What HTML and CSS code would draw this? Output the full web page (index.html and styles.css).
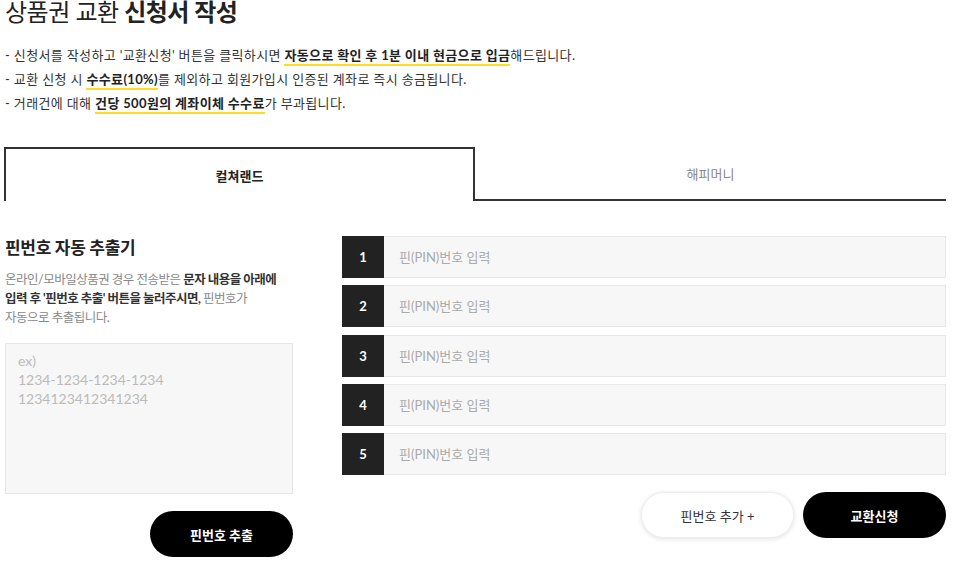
FILE: index.html
```html
<!DOCTYPE html>
<html lang="ko">
<head>
    <meta charset="UTF-8">
    <meta name="viewport" content="width=device-width, initial-scale=1.0">
    <title>상품권 교환 신청서 작성</title>
    <link rel="stylesheet" href="styles.css">
</head>
<body>
    <div class="wrap">
        <h2 class="page-title">상품권 교환 <strong>신청서 작성</strong></h2>
        <ul class="notice">
            <li>- 신청서를 작성하고 '교환신청' 버튼을 클릭하시면 <b>자동으로 확인 후 1분 이내 현금으로 입금</b>해드립니다.</li>
            <li>- 교환 신청 시 <b>수수료(10%)</b>를 제외하고 회원가입시 인증된 계좌로 즉시 송금됩니다.</li>
            <li>- 거래건에 대해 <b>건당 500원의 계좌이체 수수료</b>가 부과됩니다.</li>
        </ul>

        <div class="tabs">
            <button class="tab active">컬쳐랜드</button>
            <button class="tab">해피머니</button>
        </div>

        <div class="form">
            <div class="extract">
                <h3>핀번호 자동 추출기</h3>
                <p class="desc">온라인/모바일상품권 경우 전송받은 <b>문자 내용을 아래에<br>입력 후 '핀번호 추출' 버튼을 눌러주시면,</b> 핀번호가<br>자동으로 추출됩니다.</p>
                <textarea class="sms" placeholder="ex)&#10;1234-1234-1234-1234&#10;1234123412341234"></textarea>
                <div class="btn-row">
                    <button class="btn btn-dark">핀번호 추출</button>
                </div>
            </div>

            <div class="pins">
                <div class="pin-row"><span class="num">1</span><input type="text" placeholder="핀(PIN)번호 입력"></div>
                <div class="pin-row"><span class="num">2</span><input type="text" placeholder="핀(PIN)번호 입력"></div>
                <div class="pin-row"><span class="num">3</span><input type="text" placeholder="핀(PIN)번호 입력"></div>
                <div class="pin-row"><span class="num">4</span><input type="text" placeholder="핀(PIN)번호 입력"></div>
                <div class="pin-row"><span class="num">5</span><input type="text" placeholder="핀(PIN)번호 입력"></div>
                <div class="btn-row">
                    <button class="btn btn-light">핀번호 추가 +</button>
                    <button class="btn btn-dark">교환신청</button>
                </div>
            </div>
        </div>
    </div>
</body>
</html>
```

FILE: styles.css
```css
body {
    margin: 0;
    padding: 0;
    font-family: Lato, "Noto Sans CJK KR", sans-serif;
    color: #222;
    background: #fff;
}

.wrap {
    width: 942px;
    padding: 0 20px 0 4px;
}

.page-title {
    margin: -3px 0 0 1px;
    font-size: 24px;
    line-height: 30px;
    font-weight: 400;
    letter-spacing: -0.5px;
}

.page-title strong {
    font-weight: 700;
}

.notice {
    list-style: none;
    margin: 16px 0 0 1px;
    padding: 0;
    font-size: 13px;
    color: #333;
}

.notice li {
    line-height: 24px;
    letter-spacing: 0.35px;
}

.notice b {
    font-weight: 700;
    color: #222;
    border-bottom: 2px solid #ffdc1e;
    padding-bottom: 1px;
}

.tabs {
    display: flex;
    margin-top: 32px;
}

.tab {
    flex: 1;
    height: 54px;
    border: none;
    border-bottom: 2px solid #333;
    background: #fff;
    font-family: inherit;
    font-size: 13px;
    color: #888;
    padding: 0;
    cursor: pointer;
}

.tab.active {
    flex: 0 0 471px;
    border: 2px solid #333;
    border-bottom: none;
    color: #222;
    font-weight: 700;
}

.form {
    display: flex;
    gap: 49px;
    margin-top: 35px;
    padding-left: 1px;
}

.extract {
    width: 288px;
}

.extract h3 {
    margin: 0;
    font-size: 17px;
    line-height: 24px;
    font-weight: 700;
    letter-spacing: -0.3px;
}

.desc {
    margin: 10px 0 0;
    font-size: 12.5px;
    line-height: 19px;
    color: #888;
    letter-spacing: -0.5px;
    white-space: nowrap;
}

.desc b {
    color: #333;
}

.sms {
    display: block;
    box-sizing: border-box;
    width: 288px;
    height: 151px;
    margin-top: 16px;
    padding: 7px 12px;
    border: 1px solid #e6e6e6;
    background: #f7f7f7;
    font-family: inherit;
    font-size: 14px;
    line-height: 19px;
    resize: none;
}

.sms::placeholder {
    color: #bbb;
}

.btn-row {
    display: flex;
    justify-content: flex-end;
    gap: 9px;
    margin-top: 17px;
}

.btn {
    height: 46px;
    border-radius: 23px;
    font-family: inherit;
    font-size: 13px;
    font-weight: 700;
    cursor: pointer;
}

.btn-dark {
    width: 143px;
    border: none;
    background: #000;
    color: #fff;
}

.btn-light {
    width: 153px;
    border: 1px solid #eee;
    background: #fff;
    color: #333;
    font-weight: 400;
    box-shadow: 0 1px 5px rgba(0, 0, 0, 0.12);
}

.pins {
    flex: 1;
    display: flex;
    flex-direction: column;
    gap: 7.3px;
}

.pins .btn-row {
    margin-top: 10px;
}

.pin-row {
    display: flex;
    height: 42px;
}

.num {
    width: 42px;
    display: flex;
    align-items: center;
    justify-content: center;
    background: #222;
    color: #fff;
    font-size: 13px;
    font-weight: 700;
}

.pin-row input {
    flex: 1;
    box-sizing: border-box;
    height: 42px;
    border: 1px solid #e8e8e8;
    border-left: none;
    background: #f7f7f7;
    padding: 0 15px;
    font-family: inherit;
    font-size: 13px;
    outline: none;
}

.pin-row input::placeholder {
    color: #aaa;
}
```
